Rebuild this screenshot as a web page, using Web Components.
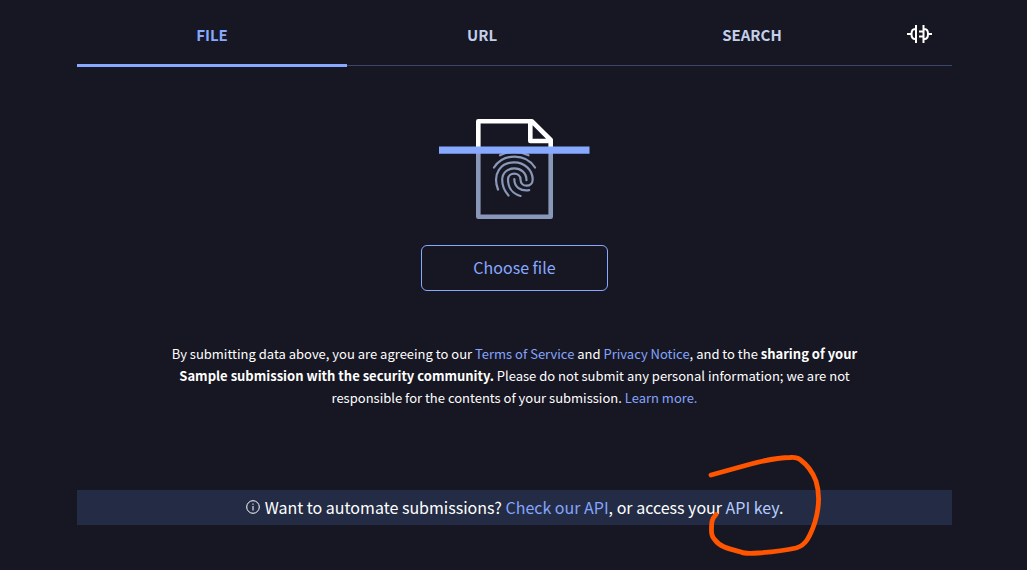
<!DOCTYPE html>
<html lang="en">
<head>
<meta charset="utf-8">
<meta name="viewport" content="width=device-width, initial-scale=1">
<title>File submission</title>
<style>
  html { background: #171723; }
  body {
    margin: 0;
    min-height: 100vh;
    box-sizing: border-box;
    border-bottom: 2px solid #11101b;
    color: #fff;
    font-family: "Noto Sans CJK SC", "Open Sans", sans-serif;
    --link: #84a5fd;
    --accent: #87a9ff;
    --panel: #232c44;
  }
</style>
</head>
<body>
<submit-page></submit-page>

<script>
function define(name, markup) {
  const template = document.createElement('template');
  template.innerHTML = markup;
  customElements.define(name, class extends HTMLElement {
    constructor() {
      super();
      this.attachShadow({ mode: 'open' }).append(template.content.cloneNode(true));
    }
  });
}

define('nav-tab', `
  <style>
    :host { display: block; flex: 1; }
    button {
      width: 100%; height: 67px; padding: 6px 0 0; border: 0;
      border-bottom: 3px solid transparent; background: none;
      color: #c3cfea; font: bold 15px/20px "Noto Sans CJK SC", "Open Sans", sans-serif; cursor: pointer;
    }
    :host([selected]) button { color: var(--accent); border-bottom-color: var(--accent); }
  </style>
  <button type="button"><slot></slot></button>`);

define('plug-button', `
  <style>
    :host { display: block; width: 65px; }
    button { display: flex; align-items: center; justify-content: center; width: 100%; height: 67px; padding: 0; border: 0; background: none; cursor: pointer; }
    svg { display: block; }
  </style>
  <button type="button" aria-label="Integrations">
    <svg width="25" height="20" viewBox="0 0 25 20" fill="none" stroke="#fff" stroke-width="2">
      <path d="M0 10h4M9 1v18M9 5H8C5.500 5 4.500 7 4.500 10s1 5 3.500 5h1M16.500 1v18M16.500 5h1c2.500 0 3.500 2 3.500 5s-1 5-3.500 5h-1M21 10h4M12 7.500h4M12 12.500h4"/>
    </svg>
  </button>`);

define('tab-bar', `
  <style>
    :host { display: flex; background: linear-gradient(#3b4766, #3b4766) 0 65px / 100% 1px no-repeat; }
  </style>
  <slot></slot>`);

define('scan-art', `
  <style>:host { display: block; } svg { display: block; }</style>
  <svg width="151" height="100" viewBox="0 0 151 100" fill="none" stroke-linejoin="round" aria-hidden="true">
    <path d="M39.300 30V2.300H93L111.700 21V30M91.300 2.300V22H111.700" stroke="#fff" stroke-width="4.600"/>
    <path d="M39.300 34V97.700H111.700V34" stroke="#8998b8" stroke-width="4.600"/>
    <g stroke="#8998b8" stroke-width="2.200" stroke-linecap="round">
      <path d="M61 36.300Q75.300 29.500 89.500 36.300"/>
      <path d="M55 48.500C64.500 34 86.500 34 96 48.500"/>
      <path d="M59 70.500C53 54.500 62 43.300 75.300 43.300C85.500 43.300 93.700 51 93.700 60.500C93.700 68.500 81.500 69 81.500 60.500C81.500 52.700 69 52.700 69 60.500C69 69 74 75 81.500 77"/>
      <path d="M69.500 76.500C65.500 72 63.200 67.500 63.200 61C63.200 45.500 87.500 45.500 87.500 61.200"/>
      <path d="M75.300 60C75.300 68 81.500 72.500 90.200 71.200"/>
    </g>
    <path d="M0 27.500H150.500V34.800H0Z" fill="#87a9ff"/>
  </svg>`);

define('file-picker', `
  <style>
    :host { display: block; }
    button {
      display: block; width: 187px; height: 46px; padding: 0 0 2px; border: 1px solid var(--accent);
      border-radius: 6px; background: none; color: var(--accent);
      font: 16px/24px "Noto Sans CJK SC", "Open Sans", sans-serif; cursor: pointer;
    }
  </style>
  <button type="button"><slot></slot></button>`);

define('text-link', `
  <style>
    :host { display: inline; }
    a { color: var(--link); text-decoration: none; }
    :host([light]) a { color: #b5cbff; }
  </style>
  <a href="#"><slot></slot></a>`);

define('legal-note', `
  <style>
    :host { display: block; max-width: 700px; font-size: 13px; line-height: 22px; text-align: center; }
    p { margin: 0; }
  </style>
  <p><slot></slot></p>`);

define('pen-loop', `
  <style>
    :host { position: absolute; left: 50%; top: -36px; margin-left: 191px; pointer-events: none; }
    svg { display: block; }
  </style>
  <svg width="116" height="102" viewBox="706 454 116 102" fill="none" stroke="#ff5500" stroke-width="4.800" stroke-linecap="round" stroke-linejoin="round" aria-hidden="true">
    <path d="M711 475L750 464.200Q776 457.500 790 457.500Q797 457 800 459.500C809 466 813 473 816 481C820 494 818.500 510 815 522Q811 534 807 540Q803 546 796 548Q780 551.500 758 553Q745 554 741 552C730 549 720 547 715 540Q711 536 711.500 529C711.500 521 712 519 716 514.500"/>
  </svg>`);

define('api-banner', `
  <style>
    :host { display: block; position: relative; background: var(--panel); }
    p { display: flex; align-items: center; justify-content: center; gap: 5px; margin: 0; height: 33px; padding-bottom: 2px; font-size: 16px; line-height: 24px; }
    svg { display: block; }
  </style>
  <p>
    <svg width="14" height="14" viewBox="0 0 14 14" fill="none" stroke="#fff" aria-hidden="true">
      <circle cx="7" cy="7" r="6.300"/><path d="M7 6v4.500M7 3.500v1.300"/>
    </svg>
    <span><slot></slot></span>
  </p>
  <pen-loop></pen-loop>`);

define('submit-page', `
  <style>
    :host { display: block; padding: 0 75px 45px 77px; }
    main { display: flex; flex-direction: column; align-items: center; }
    scan-art { margin-top: 52px; }
    file-picker { margin-top: 26px; }
    legal-note { margin-top: 52px; }
    api-banner { align-self: stretch; margin-top: 81px; }
  </style>
  <tab-bar>
    <nav-tab selected>FILE</nav-tab>
    <nav-tab>URL</nav-tab>
    <nav-tab>SEARCH</nav-tab>
    <plug-button></plug-button>
  </tab-bar>
  <main>
    <scan-art></scan-art>
    <file-picker>Choose file</file-picker>
    <legal-note>By submitting data above, you are agreeing to our <text-link>Terms of Service</text-link> and <text-link>Privacy Notice</text-link>, and to the <b>sharing of your Sample submission with the security community.</b> Please do not submit any personal information; we are not responsible for the contents of your submission. <text-link>Learn more.</text-link></legal-note>
    <api-banner>Want to automate submissions? <text-link>Check our API</text-link>, or access your <text-link light>API key</text-link>.</api-banner>
  </main>`);
</script>
</body>
</html>
